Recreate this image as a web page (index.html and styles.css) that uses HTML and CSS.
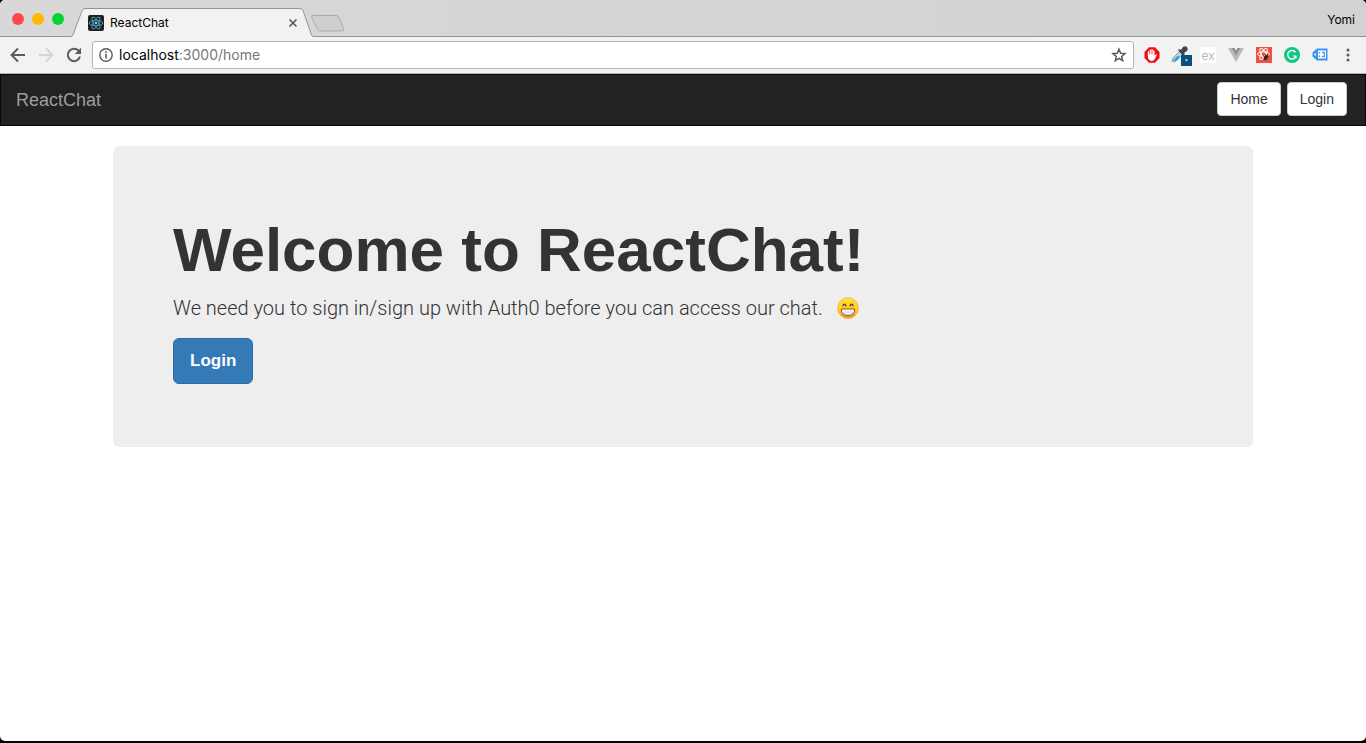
FILE: index.html
```html
<!DOCTYPE html>
<html lang="en">
<head>
<meta charset="utf-8">
<meta name="viewport" content="width=device-width, initial-scale=1">
<title>ReactChat</title>
<link rel="stylesheet" href="styles.css">
</head>
<body>
<div class="window">
  <header class="tab-strip">
    <div class="window-controls">
      <button class="light light-close" aria-label="Close window"></button>
      <button class="light light-minimize" aria-label="Minimize window"></button>
      <button class="light light-zoom" aria-label="Zoom window"></button>
    </div>
    <div class="tab">
      <svg class="tab-shape" viewBox="0 0 244 29" aria-hidden="true"><path d="M0 29V28.5H1.500Q2.500 28 3 26.500L12 3Q13 .5 15 .5H230Q232 .5 233 2.500L241.500 27Q242 28.500 244 28.500V29Z" fill="#f2f2f2"/><path d="M0 28.500H1.500Q2.500 28 3 26.500L12 3Q13 .5 15 .5H230Q232 .5 233 2.500L241.500 27Q242 28.500 244 28.500" fill="none" stroke="#939393"/></svg>
      <svg class="favicon" viewBox="0 0 16 16" aria-hidden="true"><rect width="16" height="16" rx="2" fill="#222"/><g fill="none" stroke="#61dafb" stroke-width=".7" opacity=".85"><ellipse cx="8" cy="8" rx="6.700" ry="2.600"/><ellipse cx="8" cy="8" rx="6.700" ry="2.600" transform="rotate(60 8 8)"/><ellipse cx="8" cy="8" rx="6.700" ry="2.600" transform="rotate(120 8 8)"/></g><circle cx="8" cy="8" r="1.300" fill="#61dafb"/></svg>
      <span class="tab-title">ReactChat</span>
      <button class="tab-close" aria-label="Close tab"><svg width="10" height="10" viewBox="0 0 10 10"><path d="M1.500 1.500l7 7M8.500 1.500l-7 7" stroke="#555" stroke-width="1.600"/></svg></button>
    </div>
    <button class="new-tab" aria-label="New tab"><svg width="34" height="17" viewBox="0 0 34 17"><path d="M2 .5H25Q27 .5 28 2.500L32.500 13.500Q33.500 16 31 16H9.500Q7.500 16 6.500 14L1 3Q0 .5 2 .5Z" fill="#cfcfcf" stroke="#aaa"/></svg></button>
    <button class="profile">Yomi</button>
  </header>

  <div class="toolbar">
    <button class="tool" aria-label="Back"><svg width="16" height="16" viewBox="0 0 16 16"><path d="M15 8H2M8 1.500L1.500 8 8 14.500" fill="none" stroke="#5a5a5a" stroke-width="1.900"/></svg></button>
    <button class="tool" aria-label="Forward" disabled><svg width="16" height="16" viewBox="0 0 16 16"><path d="M1 8H14M8 1.500L14.500 8 8 14.500" fill="none" stroke="#d4d4d4" stroke-width="1.900"/></svg></button>
    <button class="tool" aria-label="Reload"><svg width="16" height="16" viewBox="0 0 16 16"><path d="M13 4.200A6.200 6.200 0 1 0 14 9.600" fill="none" stroke="#5a5a5a" stroke-width="2"/><path d="M15 .8V7H8.800Z" fill="#5a5a5a"/></svg></button>
    <div class="omnibox">
      <svg width="14" height="14" viewBox="0 0 14 14" aria-hidden="true"><circle cx="7" cy="7" r="6.200" fill="none" stroke="#5a5a5a" stroke-width="1.400"/><path d="M7 6v4.500M7 3.200v1.700" stroke="#5a5a5a" stroke-width="1.600"/></svg>
      <a class="address" href="#"><span class="host">localhost</span>:3000/home</a>
      <button class="tool star" aria-label="Bookmark"><svg width="16" height="16" viewBox="0 0 16 16"><path d="M8 2.200L9.700 6.200l4.300.4-3.300 2.800 1 4.200L8 11.300l-3.700 2.300 1-4.200L2 6.600l4.300-.4Z" fill="none" stroke="#5a5a5a" stroke-width="1.500"/></svg></button>
    </div>
    <div class="extensions">
      <button class="tool" aria-label="Ad blocker"><svg width="16" height="16" viewBox="0 0 16 16"><path d="M5 .3h6L15.500 5v6L11 15.700H5L.5 11V5Z" fill="#f00b15"/><path d="M3.800 9V4.600q.9-1 1.700 0V3q.9-1 1.700 0v-.6q.9-1 1.700 0V3.700q.9-1 1.700 0v5l1-1.200q1.200-.6 1.200.4l-1.800 3.800q-1 2.300-3.300 2.300-3.900-.3-3.900-5Z" fill="#fff"/><path d="M5.500 4v3.500M7.200 3v4.500M8.900 3.500v4" stroke="#f00b15" stroke-width=".5"/></svg></button>
      <button class="tool" aria-label="Color picker"><svg width="24" height="24" viewBox="-4 -4 24 24"><path d="M0 14l1-3 7-7 3 3-7 7-3 1Z" fill="#b9d7e8" stroke="#888" stroke-width=".8"/><path d="M1 13.500l5-5 2 2-4 3.500Z" fill="#24a4df"/><path d="M6 3l2-1 1 1 2-3q2-1.500 4 0 1.500 2 0 4l-3 2 1 1-2 2Z" fill="#444"/><rect x="9" y="8" width="11" height="11" fill="#07507f"/><path d="M13 12.500h3l-1.500 2Z" fill="#fff"/></svg></button>
      <button class="tool ext-ex" aria-label="ex extension">ex</button>
      <button class="tool" aria-label="Vue devtools"><svg width="16" height="16" viewBox="0 0 16 16"><path d="M0 1h3.500L8 9l4.500-8H16L8 15Z" fill="#b9b9b9"/><path d="M3.500 1h3L8 3.800 9.500 1h3L8 9Z" fill="#8e8e8e"/></svg></button>
      <button class="tool" aria-label="React developer extension"><svg width="16" height="16" viewBox="0 0 16 16"><rect width="16" height="16" fill="#f0513c"/><g fill="none" stroke="#fff" stroke-width="1"><ellipse cx="7.500" cy="7" rx="6" ry="2.300"/><ellipse cx="7.500" cy="7" rx="6" ry="2.300" transform="rotate(60 7.500 7)"/><ellipse cx="7.500" cy="7" rx="6" ry="2.300" transform="rotate(120 7.500 7)"/></g><ellipse cx="10" cy="10.500" rx="1.800" ry="3" transform="rotate(35 10 10.500)" fill="#33201d"/><path d="M7 8.500l5 4M7.500 12l5-4.500M9.500 7l.5 6.500" stroke="#33201d" stroke-width=".8"/></svg></button>
      <button class="tool" aria-label="Grammar checker"><svg width="16" height="16" viewBox="0 0 16 16"><circle cx="8" cy="8" r="8" fill="#0dc781"/><path d="M11.500 5.200A4.300 4.300 0 1 0 12 9.500" fill="none" stroke="#fff" stroke-width="1.500"/><path d="M8.500 8.500h4V12Z" fill="#fff"/></svg></button>
      <button class="tool" aria-label="Tag extension"><svg width="16" height="16" viewBox="0 0 16 16"><path d="M5 1.500h10.500v12H5L.5 9.500v-4Z" fill="#3b91f5"/><path d="M6 3.500h8v8H6Z" fill="#fff"/><path d="M7.500 5v1.500M7.500 8.500V10M10 5.300h2.200v4.400H10" fill="none" stroke="#3b91f5" stroke-width="1.300"/><circle cx="3.200" cy="7.500" r="1" fill="#fff"/></svg></button>
    </div>
    <button class="tool" aria-label="Menu"><svg width="4" height="16" viewBox="0 0 4 16"><g fill="#5a5a5a"><circle cx="2" cy="3" r="1.500"/><circle cx="2" cy="8" r="1.500"/><circle cx="2" cy="13" r="1.500"/></g></svg></button>
  </div>

  <nav class="navbar">
    <a class="brand" href="#">ReactChat</a>
    <div class="nav-buttons">
      <button class="btn btn-default">Home</button>
      <button class="btn btn-default">Login</button>
    </div>
  </nav>

  <main class="container">
    <section class="jumbotron">
      <h1>Welcome to ReactChat!</h1>
      <p class="lead">We need you to sign in/sign up with Auth0 before you can access our chat.
        <svg class="emoji" viewBox="0 0 22 22" role="img" aria-label="Grinning face"><defs><linearGradient id="face" x1="0" y1="0" x2="0" y2="1"><stop offset="0" stop-color="#ffe42e"/><stop offset=".6" stop-color="#fcc92b"/><stop offset="1" stop-color="#e9962c"/></linearGradient></defs><circle cx="11" cy="11" r="10.500" fill="url(#face)" stroke="#e8a334" stroke-width=".5"/><path d="M6 8.800q1.400-3.400 2.800 0M13.200 8.800q1.400-3.400 2.800 0" fill="none" stroke="#513420" stroke-width="1.300" stroke-linecap="round"/><path d="M4.300 12h13.400q.3 6.400-6.700 6.400t-6.700-6.400Z" fill="#fff" stroke="#81532d"/><path d="M5 15.200h12M8 12.500v5M11 12.500v5.500M14 12.500v5" stroke="#c9bcae" stroke-width=".5"/></svg></p>
      <button class="btn btn-primary">Login</button>
    </section>
  </main>
</div>
</body>
</html>
```

FILE: styles.css
```css
* { box-sizing: border-box; }

body {
  margin: 0;
  min-height: 100vh;
  display: flex;
  flex-direction: column;
  padding-bottom: 2px;
  background: #000;
  color: #333;
  font-family: "Liberation Sans", Arial, sans-serif;
  font-size: 14px;
}

button {
  margin: 0;
  padding: 0;
  border: 0;
  background: none;
  color: inherit;
  font: inherit;
}

svg { display: block; flex: none; }

.window {
  flex: 1;
  display: flex;
  flex-direction: column;
  overflow: hidden;
  border-radius: 5px;
  background: #fff;
}

/* Browser tabs */
.tab-strip {
  display: flex;
  align-items: flex-end;
  height: 37px;
  border-bottom: 1px solid #939393;
  background: linear-gradient(90deg, #d8d8d8, #d2d2d2);
  color: #000;
  font-family: Inter, sans-serif;
  font-size: 12px;
}

.window-controls {
  display: flex;
  gap: 8px;
  align-self: center;
  padding: 1px 6px 0 12px;
}

.light { width: 12px; height: 12px; border-radius: 50%; }
.light-close { background: #ff464b; }
.light-minimize { background: #ffb900; }
.light-zoom { background: #00d62f; }

.tab {
  position: relative;
  display: flex;
  align-items: center;
  gap: 6px;
  width: 244px;
  height: 29px;
  margin-bottom: -1px;
  padding: 0 16px 0 18px;
}

.tab-shape { position: absolute; inset: 0; }
.favicon { position: relative; width: 16px; height: 16px; }
.tab-title { position: relative; flex: 1; }
.tab-close { position: relative; }

.new-tab { align-self: center; margin: 11px 0 0 -3px; }
.profile { align-self: center; margin: 2px 11px 0 auto; }

/* Address bar */
.toolbar {
  display: flex;
  align-items: center;
  gap: 12px;
  height: 37px;
  padding: 0 16px 0 10px;
  border-bottom: 1px solid #b5b5b5;
  background: #f2f2f2;
}

.tool { display: flex; align-items: center; justify-content: center; }

.omnibox {
  flex: 1;
  display: flex;
  align-items: center;
  gap: 6px;
  height: 28px;
  margin-left: -2px;
  padding: 0 6px;
  border: 1px solid #b5b5b5;
  border-radius: 3px;
  background: #fff;
}

.address {
  flex: 1;
  color: #777;
  font-family: Inter, sans-serif;
  font-size: 14px;
  line-height: 16px;
  text-decoration: none;
}

.host { color: #000; }

.extensions {
  display: grid;
  grid-template-columns: repeat(7, 28px);
  margin: 0 0 0 -8px;
}

.ext-ex {
  width: 16px;
  height: 16px;
  justify-self: center;
  align-self: center;
  background: #fff;
  color: #aaa;
  font-family: Inter, sans-serif;
  font-size: 12px;
  font-weight: 300;
}

/* Site navigation */
.navbar {
  display: flex;
  align-items: flex-start;
  justify-content: space-between;
  min-height: 52px;
  padding: 7px 18px 7px 15px;
  border: 1px solid #080808;
  background: #222;
}

.brand {
  color: #9d9d9d;
  font-size: 18px;
  line-height: 36px;
  text-decoration: none;
}

.nav-buttons { display: flex; gap: 6px; }

.btn { border: 1px solid; border-radius: 4px; }

.btn-default {
  padding: 6px 12px;
  border-color: #ccc;
  background: #fff;
  color: #333;
  font-size: 14px;
  line-height: 20px;
}

/* Page content */
.container {
  width: 100%;
  max-width: 1170px;
  margin: 0 auto;
  padding: 20px 15px;
}

.jumbotron {
  padding: 69px 60px 63px;
  border-radius: 6px;
  background: #eee;
}

h1 {
  margin: 0 0 9px;
  font-size: 62px;
  font-weight: 700;
  line-height: 69px;
}

.lead {
  display: flex;
  align-items: center;
  gap: 14px;
  margin: 0 0 15px;
  font-family: Roboto, sans-serif;
  font-size: 20px;
  font-weight: 300;
  line-height: 30px;
}

.emoji { width: 22px; height: 22px; }

.btn-primary {
  padding: 10px 16px;
  border-color: #2e6da4;
  border-radius: 6px;
  background: #337ab7;
  color: #fff;
  font-size: 17px;
  font-weight: 700;
  line-height: 24px;
}
```
